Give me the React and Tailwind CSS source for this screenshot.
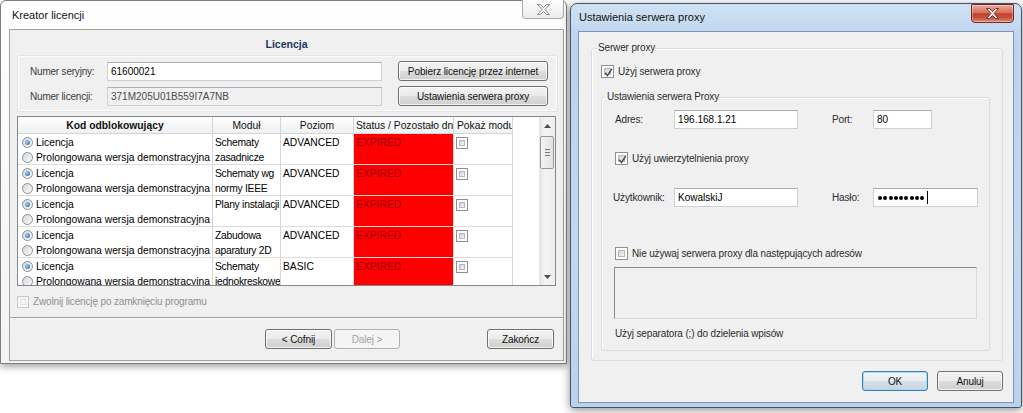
import React from "react";

const BTN_BG =
  "border-[#707070] bg-[linear-gradient(180deg,#f3f3f3_0%,#ebebeb_48%,#dddddd_52%,#cfcfcf_100%)] shadow-[inset_0_0_0_1px_rgba(255,255,255,0.75)] text-[#111]";

function Button({ children, className = "", disabled = false, focused = false }) {
  let cls = BTN_BG;
  if (disabled) cls = "border-[#adb2b5] bg-[#f4f4f4] text-[#a3a3a3]";
  else if (focused)
    cls =
      "border-[#3c7fb1] bg-[linear-gradient(180deg,#f2f6f9_0%,#e6edf3_48%,#d6e0e9_52%,#c9d4de_100%)] shadow-[inset_0_0_0_1px_#a7d9f5] text-[#111]";
  return (
    <div
      className={`flex shrink-0 items-center justify-center whitespace-nowrap rounded-[3px] border text-[10px] tracking-[-0.1px] ${cls} ${className}`}
    >
      {children}
    </div>
  );
}

function TextBox({ className = "", children, readOnly = false }) {
  return (
    <div
      className={`flex shrink-0 items-center overflow-hidden whitespace-nowrap border border-[#cdd0d6] border-t-[#abadb3] pl-[3px] text-[10px] ${
        readOnly ? "bg-[#f0f0f0] text-[#4a4a4a]" : "bg-white text-black"
      } ${className}`}
    >
      {children}
    </div>
  );
}

function CheckBox({ checked = false, disabled = false, className = "w-[13px] h-[13px]" }) {
  return (
    <span
      className={`relative flex shrink-0 items-center justify-center border ${
        disabled ? "border-[#c9c9c9] bg-[#f6f6f6]" : "border-[#8e8f8f] bg-white"
      } ${className}`}
    >
      <span
        className={`h-[calc(100%-4px)] w-[calc(100%-4px)] border ${
          disabled
            ? "border-[#e2e2e2] bg-[#f6f6f6]"
            : "border-[#b4b8bd] bg-[linear-gradient(135deg,#cfd3d8,#f5f5f5)]"
        }`}
      />
      {checked && (
        <svg className="absolute left-[1px] top-[1px]" width="11" height="11" viewBox="0 0 11 11">
          <path d="M2.2 5.6 L4.4 8.4 L8.8 2" fill="none" stroke="#505050" strokeWidth="1.5" />
        </svg>
      )}
    </span>
  );
}

function Radio({ checked }) {
  return (
    <span className="flex h-[11px] w-[11px] shrink-0 items-center justify-center rounded-full border border-[#8e8f8f] bg-[linear-gradient(135deg,#d3d6da,#fbfbfb)]">
      {checked && (
        <span className="h-[5px] w-[5px] rounded-full bg-[radial-gradient(circle_at_35%_35%,#9fd0f8,#1f5fae)]" />
      )}
    </span>
  );
}

function XGlyph({ fill, stroke }) {
  return (
    <svg width="13" height="11" viewBox="-0.5 -0.5 13 11">
      <polygon
        points="0,0 3,0 6,3 9,0 12,0 7.5,5 12,10 9,10 6,7 3,10 0,10 4.5,5"
        fill={fill}
        stroke={stroke}
        strokeWidth="1"
        strokeLinejoin="round"
      />
    </svg>
  );
}

const rows = [
  { mod: ["Schematy", "zasadnicze"], lvl: "ADVANCED" },
  { mod: ["Schematy wg", "normy IEEE"], lvl: "ADVANCED" },
  { mod: ["Plany instalacji"], lvl: "ADVANCED" },
  { mod: ["Zabudowa", "aparatury 2D"], lvl: "ADVANCED" },
  { mod: ["Schematy", "jednokreskowe"], lvl: "BASIC" },
];

function LicenseTable() {
  return (
    <div className="ml-[7px] mt-[5px] flex h-[170px] w-[539px] shrink-0 border border-[#828790] bg-white">
      <div className="flex-1 overflow-hidden">
        <div className="w-[495px] text-[10.3px] leading-[15px] text-black">
          <div className="flex h-[17px] border-b border-[#d5d5d5] bg-[linear-gradient(180deg,#ffffff,#eef0f2)] text-[#111]">
            <div className="flex w-[195px] items-center justify-center border-r border-[#d5d5d5] font-bold">
              Kod odblokowujący
            </div>
            <div className="flex w-[68px] items-center justify-center border-r border-[#d5d5d5]">Moduł</div>
            <div className="flex w-[73px] items-center justify-center border-r border-[#d5d5d5]">Poziom</div>
            <div className="flex w-[100px] items-center overflow-hidden whitespace-nowrap border-r border-[#d5d5d5] pl-[2px]">
              Status / Pozostało dni
            </div>
            <div className="flex w-[59px] items-center overflow-hidden whitespace-nowrap border-r border-[#d5d5d5] pl-[3px]">
              Pokaż moduł
            </div>
          </div>
          {rows.map((r, i) => (
            <div key={i} className="flex h-[31px] border-b border-[#dcdcdc]">
              <div className="flex w-[195px] flex-col border-r border-[#d5d5d5] pl-[4px] pt-[1px]">
                <div className="flex h-[15px] items-center gap-[3px]">
                  <Radio checked />
                  <span>Licencja</span>
                </div>
                <div className="flex h-[14px] items-center gap-[3px] whitespace-nowrap">
                  <Radio />
                  <span>Prolongowana wersja demonstracyjna</span>
                </div>
              </div>
              <div className="w-[68px] overflow-hidden whitespace-nowrap border-r border-[#d5d5d5] pl-[2px] pt-[1px] tracking-[-0.25px]">
                {r.mod.map((m, j) => (
                  <div key={j}>{m}</div>
                ))}
              </div>
              <div className="w-[73px] border-r border-[#d5d5d5] pl-[2px] pt-[1px]">{r.lvl}</div>
              <div className="w-[100px] border-r border-[#d5d5d5] bg-[#ff0000] pl-[2px] pt-[1px] text-[#9a0000]">
                EXPIRED
              </div>
              <div className="w-[59px] border-r border-[#d5d5d5] pl-[2px] pt-[3px]">
                <CheckBox className="w-[12px] h-[12px]" />
              </div>
            </div>
          ))}
        </div>
      </div>
      <div className="flex w-[16px] shrink-0 flex-col items-center bg-[linear-gradient(90deg,#e4e4e4,#f4f4f4_40%,#eeeeee)]">
        <div className="flex h-[17px] items-center justify-center">
          <svg width="7" height="4" viewBox="0 0 7 4">
            <polygon points="3.5,0 7,4 0,4" fill="#4d4d4d" />
          </svg>
        </div>
        <div className="mt-[2px] flex h-[33px] w-[14px] flex-col items-center justify-center gap-[2px] rounded-[2px] border border-[#979797] bg-[linear-gradient(90deg,#f4f4f4,#e2e2e2)]">
          <span className="h-[1px] w-[5px] bg-[#7a7a7a]" />
          <span className="h-[1px] w-[5px] bg-[#7a7a7a]" />
          <span className="h-[1px] w-[5px] bg-[#7a7a7a]" />
        </div>
        <div className="flex-1" />
        <div className="flex h-[17px] items-center justify-center">
          <svg width="7" height="4" viewBox="0 0 7 4">
            <polygon points="0,0 7,0 3.5,4" fill="#4d4d4d" />
          </svg>
        </div>
      </div>
    </div>
  );
}

function LeftWindow() {
  return (
    <div className="absolute left-0 top-0 flex h-[364px] w-[567px] flex-col rounded-t-[6px] border border-[#7d7d7d] bg-[linear-gradient(180deg,#ffffff,#f3f3f3)] pb-[2px] pl-[8px] pr-[2px] shadow-[0_3px_7px_rgba(0,0,0,0.35)]">
      <div className="relative flex h-[28px] shrink-0 items-center pl-[3px] text-[11px] text-[#111]">
        Kreator licencji
        <div className="absolute right-0 top-[-1px] flex h-[19px] w-[42px] items-center justify-center rounded-b-[4px] border border-t-0 border-[#a9a9a9] bg-[linear-gradient(180deg,#fdfdfd,#ececec)]">
          <XGlyph fill="#f4f4f4" stroke="#8a8a8a" />
        </div>
      </div>
      <div className="flex flex-1 flex-col border border-[#a3a3a3] bg-[#f0f0f0]">
        <div className="mt-[7px] text-center text-[10.5px] font-bold leading-[14px] text-[#1d3461]">Licencja</div>
        <div className="ml-[8px] mt-[5px] flex h-[55px] w-[539px] shrink-0 flex-col gap-[5px] rounded-[2px] border border-[#fbfbfb] pt-[4px] shadow-[0_0_0_1px_#e4e4e4]">
          <div className="flex h-[20px] items-center">
            <span className="ml-[11px] w-[77px] text-[10px] tracking-[-0.2px] text-[#3d3d3d]">Numer seryjny:</span>
            <TextBox className="h-[19px] w-[275px]">61600021</TextBox>
            <Button className="ml-[16px] h-[20px] w-[150px]">Pobierz licencję przez internet</Button>
          </div>
          <div className="flex h-[20px] items-center">
            <span className="ml-[11px] w-[77px] text-[10px] tracking-[-0.2px] text-[#3d3d3d]">Numer licencji:</span>
            <TextBox readOnly className="h-[19px] w-[275px]">371M205U01B559I7A7NB</TextBox>
            <Button className="ml-[16px] h-[20px] w-[150px]">Ustawienia serwera proxy</Button>
          </div>
        </div>
        <LicenseTable />
        <div className="ml-[7px] mt-[9px] flex h-[13px] items-center gap-[4px]">
          <CheckBox disabled className="w-[12px] h-[12px]" />
          <span className="text-[10px] tracking-[-0.15px] text-[#8f8f8f]">Zwolnij licencję po zamknięciu programu</span>
        </div>
        <div className="mt-[9px] h-[2px] border-b border-t border-b-white border-t-[#a0a0a0]" />
        <div className="mt-[10px] flex h-[20px]">
          <Button className="ml-[255px] h-[20px] w-[67px]">&lt; Cofnij</Button>
          <Button disabled className="ml-[2px] h-[20px] w-[66px]">
            Dalej &gt;
          </Button>
          <Button className="ml-auto mr-[9px] h-[20px] w-[67px]">Zakończ</Button>
        </div>
      </div>
    </div>
  );
}

function RightWindow() {
  const label = "text-[10px] tracking-[-0.15px] text-[#2b2b2b]";
  return (
    <div className="absolute left-[570px] top-[3px] flex h-[405px] w-[452px] flex-col rounded-b-[3px] rounded-t-[7px] border border-[#3f5570] bg-[linear-gradient(180deg,#cfe1f4_0%,#bcd3ed_10%,#c3d8ef_60%,#bad2ec_100%)] px-[7px] pb-[4px] shadow-[0_2px_8px_rgba(0,0,0,0.45)]">
      <div className="relative flex h-[27px] shrink-0 items-center pl-[1px] text-[11px] text-[#111]">
        Ustawienia serwera proxy
        <div className="absolute right-0 top-0 flex h-[19px] w-[43px] items-center justify-center rounded-b-[4px] rounded-t-[1px] border border-[#6d2a22] bg-[linear-gradient(180deg,#e9a899_0%,#d7715d_45%,#c2402a_52%,#c9523c_75%,#e08f78_100%)] shadow-[inset_0_0_0_1px_rgba(255,255,255,0.35)]">
          <XGlyph fill="#ffffff" stroke="#7b3429" />
        </div>
      </div>
      <div className="flex flex-1 flex-col border border-[#7b96b6] bg-[#f0f0f0]">
        <fieldset className="ml-[12px] mt-[9px] h-[320px] w-[412px] shrink-0 rounded-[3px] border border-[#d5dfe5] shadow-[inset_1px_1px_0_#ffffff]">
          <legend className={`ml-[5px] px-[1px] leading-[14px] ${label}`}>Serwer proxy</legend>
          <div className="ml-[9px] mt-[10px] flex h-[13px] items-center gap-[4px]">
            <CheckBox checked />
            <span className={label}>Użyj serwera proxy</span>
          </div>
          <fieldset className="ml-[9px] mt-[12px] h-[261px] w-[389px] rounded-[3px] border border-[#d5dfe5] shadow-[inset_1px_1px_0_#ffffff]">
            <legend className={`ml-[4px] px-[1px] leading-[14px] ${label}`}>Ustawienia serwera Proxy</legend>
            <div className="mt-[6px] flex h-[19px] items-center">
              <span className={`ml-[13px] w-[59px] ${label}`}>Adres:</span>
              <TextBox className="h-[19px] w-[124px]">196.168.1.21</TextBox>
              <span className={`ml-[34px] w-[41px] ${label}`}>Port:</span>
              <TextBox className="h-[19px] w-[59px]">80</TextBox>
            </div>
            <div className="ml-[13px] mt-[23px] flex h-[13px] items-center gap-[4px]">
              <CheckBox checked />
              <span className={label}>Użyj uwierzytelnienia proxy</span>
            </div>
            <div className="mt-[23px] flex h-[19px] items-center">
              <span className={`ml-[11px] w-[61px] ${label}`}>Użytkownik:</span>
              <TextBox className="h-[19px] w-[124px]">KowalskiJ</TextBox>
              <span className={`ml-[34px] w-[41px] ${label}`}>Hasło:</span>
              <TextBox className="h-[19px] w-[105px] border-[#8e9bab] border-t-[#6f7d8f]">
                <div className="flex items-center gap-[1.3px] pl-[1px]">
                  {Array.from({ length: 9 }).map((_, i) => (
                    <span key={i} className="h-[4px] w-[4px] rounded-full bg-black" />
                  ))}
                  <span className="ml-[1px] h-[13px] w-[1px] bg-black" />
                </div>
              </TextBox>
            </div>
            <div className="ml-[13px] mt-[40px] flex h-[13px] items-center gap-[4px]">
              <CheckBox />
              <span className={label}>Nie używaj serwera proxy dla następujących adresów</span>
            </div>
            <div className="ml-[12px] mt-[7px] h-[52px] w-[363px] border border-b-[#dadada] border-l-[#8c8c8c] border-r-[#dadada] border-t-[#8c8c8c] bg-[#f0f0f0]" />
            <div className={`ml-[13px] mt-[9px] leading-[12px] ${label}`}>Użyj separatora (;) do dzielenia wpisów</div>
          </fieldset>
        </fieldset>
        <div className="mr-[10px] mt-[10px] flex justify-end gap-[9px]">
          <Button focused className="h-[20px] w-[66px]">
            OK
          </Button>
          <Button className="h-[20px] w-[66px]">Anuluj</Button>
        </div>
      </div>
    </div>
  );
}

export default function App() {
  return (
    <div className="relative h-[413px] w-[1023px] overflow-hidden bg-white font-['Liberation_Sans',Arial,sans-serif] text-black">
      <LeftWindow />
      <RightWindow />
    </div>
  );
}
